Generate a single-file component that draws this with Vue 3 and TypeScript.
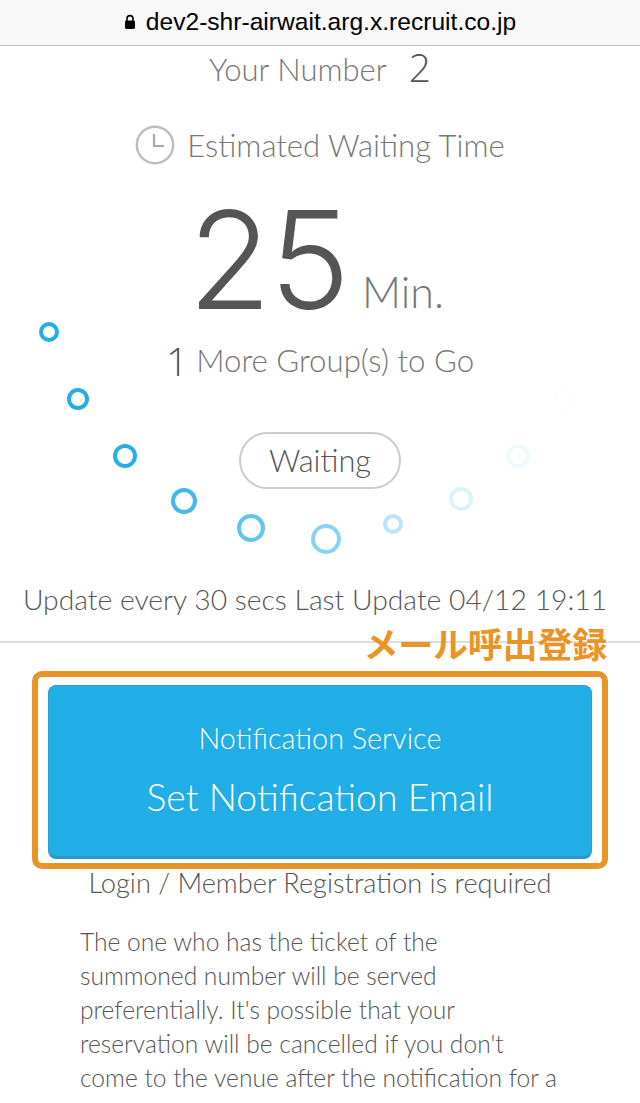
<script setup lang="ts">
interface Dot { x: number; y: number; d: number; o: number }
const dots: Dot[] = [
  { x: 49, y: 332, d: 20, o: 1 },
  { x: 78, y: 399, d: 22, o: 1 },
  { x: 125, y: 456, d: 24, o: 0.97 },
  { x: 184, y: 501, d: 26, o: 0.85 },
  { x: 251, y: 528, d: 28, o: 0.7 },
  { x: 326, y: 539, d: 30, o: 0.52 },
  { x: 393, y: 524, d: 20, o: 0.32 },
  { x: 461, y: 499, d: 24, o: 0.16 },
  { x: 518, y: 456, d: 24, o: 0.08 },
  { x: 566, y: 400, d: 24, o: 0.01 },
]
function dotStyle(p: Dot) {
  return {
    left: `${p.x - p.d / 2}px`,
    top: `${p.y - p.d / 2}px`,
    width: `${p.d}px`,
    height: `${p.d}px`,
    opacity: p.o,
  }
}
</script>

<template>
  <div class="page">
    <header class="bar">
      <svg class="lock" viewBox="0 0 12 16" width="12" height="16">
        <path d="M3 7V4.6a3 3 0 0 1 6 0V7" fill="none" stroke="#000" stroke-width="1.6" />
        <rect x="1" y="6.6" width="10" height="8.4" rx="1.4" fill="#000" />
      </svg>
      <span>dev2-shr-airwait.arg.x.recruit.co.jp</span>
    </header>

    <section class="status">
      <div class="number"><span>Your Number</span><b>2</b></div>
      <div class="estimate">
        <svg viewBox="0 0 40 40" width="40" height="40">
          <circle cx="20" cy="20" r="18.2" fill="none" stroke="#bdbdbd" stroke-width="2.4" />
          <path d="M19 9v12h10" fill="none" stroke="#a8a8a8" stroke-width="2.2" />
        </svg>
        <span>Estimated Waiting Time</span>
      </div>
      <div class="time"><b>25</b><span>Min.</span></div>
      <div class="groups"><b>1</b><span>More Group(s) to Go</span></div>
      <div class="pill">Waiting</div>
      <p class="update">Update every 30 secs Last Update 04/12 19:11</p>
    </section>

    <section class="notify">
      <div class="label">メール呼出登録</div>
      <div class="frame">
        <button class="cta">
          <span class="small">Notification Service</span>
          <span class="big">Set Notification Email</span>
        </button>
      </div>
      <p class="login">Login / Member Registration is required</p>
      <p class="body">The one who has the ticket of the summoned number will be served preferentially. It's possible that your reservation will be cancelled if you don't come to the venue after the notification for a</p>
    </section>

    <i v-for="(p, i) in dots" :key="i" class="dot" :style="dotStyle(p)"></i>
  </div>
</template>

<style>
html, body { margin: 0; padding: 0; background: #fff; }
</style>

<style scoped>
.page {
  position: relative;
  width: 640px;
  height: 1103px;
  overflow: hidden;
  background: #fff;
  font-family: Lato, "Noto Sans CJK JP", sans-serif;
  font-weight: 300;
  color: #777;
}
.bar {
  height: 46px;
  box-sizing: border-box;
  padding-bottom: 1px;
  background: #f8f8f8;
  border-bottom: 1px solid #bcbcbc;
  display: flex;
  align-items: center;
  justify-content: center;
  gap: 10px;
  font-family: "Liberation Sans", sans-serif;
  font-weight: 400;
  font-size: 24.6px;
  color: #000;
}
.lock { flex: none; }
.status {
  height: 597px;
  box-sizing: border-box;
  border-bottom: 2px solid #ddd;
  display: flex;
  flex-direction: column;
  align-items: center;
}
.number {
  height: 46px;
  display: flex;
  align-items: center;
  gap: 22px;
  font-size: 31px;
}
.number b {
  font-family: "Open Sans", sans-serif;
  font-weight: 300;
  font-size: 39px;
  color: #555;
  line-height: 46px;
  margin-top: -4px;
}
.estimate {
  margin-top: 31px;
  height: 44px;
  display: flex;
  align-items: center;
  gap: 12px;
  font-size: 31.1px;
}
.time {
  margin: 28px 0 0 -8px;
  height: 122px;
  display: flex;
  align-items: flex-end;
  gap: 14px;
}
.time b {
  font-family: Inter, sans-serif;
  font-weight: 300;
  font-size: 136px;
  line-height: 122px;
  letter-spacing: -2px;
  margin-bottom: -4px;
  color: #555;
}
.time span { font-size: 43px; line-height: 50px; }
.groups {
  margin-top: 18px;
  height: 50px;
  display: flex;
  align-items: center;
  gap: 8px;
  font-size: 31.2px;
}
.groups b {
  font-family: "Open Sans", sans-serif;
  font-weight: 300;
  font-size: 39px;
  color: #555;
}
.pill {
  margin-top: 47px;
  width: 162px;
  height: 57px;
  box-sizing: border-box;
  border: 2px solid #ccc;
  border-radius: 29px;
  display: flex;
  align-items: center;
  justify-content: center;
  font-size: 30.8px;
  color: #555;
}
.update {
  margin: 90px 0 0 -10px;
  font-size: 28.3px;
  line-height: 40px;
  color: #555;
  white-space: nowrap;
}
.notify {
  position: relative;
  display: flex;
  flex-direction: column;
  align-items: center;
}
.label {
  position: absolute;
  top: -20px;
  right: 33px;
  font-family: "Noto Sans CJK JP", sans-serif;
  font-weight: 700;
  font-size: 35px;
  line-height: 40px;
  letter-spacing: -0.2px;
  color: #e99426;
}
.frame {
  margin-top: 28px;
  width: 576px;
  height: 198px;
  box-sizing: border-box;
  border: 6px solid #e99426;
  border-radius: 10px;
  padding: 8px 10px 4px;
}
.cta {
  width: 100%;
  height: 100%;
  box-sizing: border-box;
  border: 1px solid #2ba0d2;
  border-bottom: 3px solid #3197c6;
  border-radius: 8px;
  padding: 0;
  background: #21ade5;
  color: #fff;
  font: inherit;
  display: flex;
  flex-direction: column;
  align-items: center;
}
.small { margin-top: 32px; font-size: 28.8px; line-height: 40px; }
.big { margin-top: 17px; font-size: 37.4px; line-height: 44px; }
.login {
  margin: 0;
  font-size: 27.2px;
  line-height: 28px;
  color: #555;
}
.body {
  margin: 28px 0 0;
  width: 480px;
  font-size: 24.6px;
  line-height: 34px;
  color: #555;
}
.dot {
  position: absolute;
  box-sizing: border-box;
  border: 4px solid #21ade5;
  border-radius: 50%;
}
</style>
